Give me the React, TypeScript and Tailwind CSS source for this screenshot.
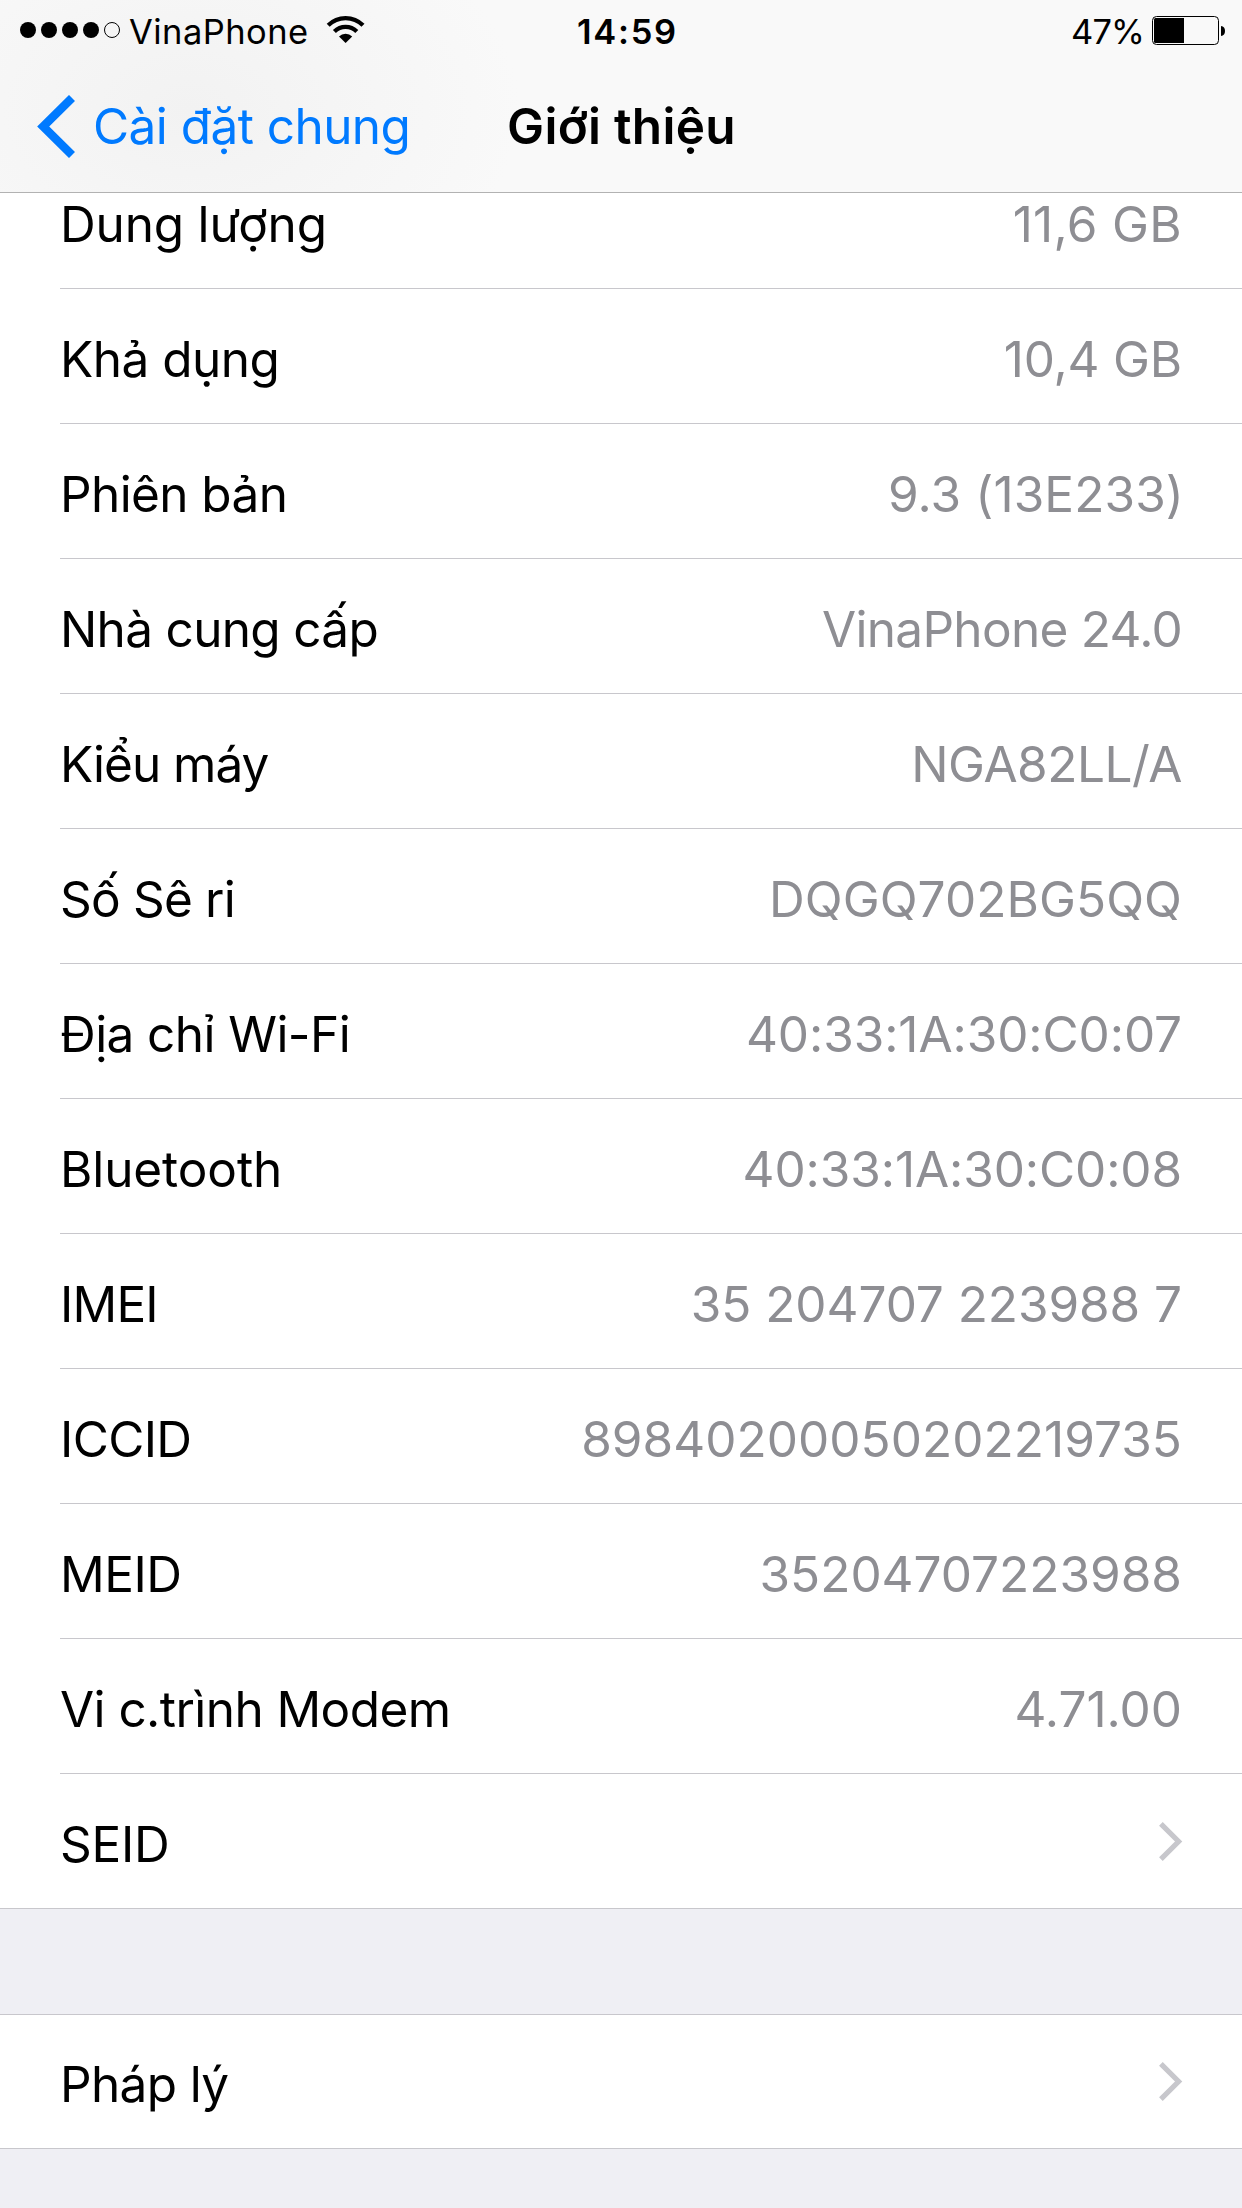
import clsx from 'clsx';

interface InfoItem {
  label: string;
  value?: string;
  labelClass: string;
  valueClass?: string;
}

const items: InfoItem[] = [
  { label: 'Dung lượng', value: '11,6 GB', labelClass: 'tracking-[-0.18px]', valueClass: 'tracking-[0.3px]' },
  { label: 'Khả dụng', value: '10,4 GB', labelClass: 'tracking-[-0.5px]', valueClass: 'tracking-[-0.2px]' },
  { label: 'Phiên bản', value: '9.3 (13E233)', labelClass: 'tracking-[-0.6px]', valueClass: 'tracking-[0.1px] -mr-0.5' },
  { label: 'Nhà cung cấp', value: 'VinaPhone 24.0', labelClass: 'tracking-[-0.68px]', valueClass: 'tracking-[-0.7px]' },
  { label: 'Kiểu máy', value: 'NGA82LL/A', labelClass: 'tracking-[-1px]', valueClass: 'tracking-[-0.45px]' },
  { label: 'Số Sê ri', value: 'DQGQ702BG5QQ', labelClass: 'tracking-[-0.8px]', valueClass: 'tracking-[0.08px]' },
  { label: 'Địa chỉ Wi-Fi', value: '40:33:1A:30:C0:07', labelClass: 'tracking-[-0.58px]', valueClass: 'tracking-[-0.08px]' },
  { label: 'Bluetooth', value: '40:33:1A:30:C0:08', labelClass: 'tracking-[-0.1px]', valueClass: 'tracking-[-0.09px]' },
  { label: 'IMEI', value: '35 204707 223988 7', labelClass: 'tracking-[-0.8px]', valueClass: 'tracking-[-0.06px]' },
  { label: 'ICCID', value: '89840200050202219735', labelClass: 'tracking-[-0.65px]', valueClass: 'tracking-[0.05px]' },
  { label: 'MEID', value: '35204707223988', labelClass: 'tracking-[-0.5px]', valueClass: 'tracking-normal' },
  { label: 'Vi c.trình Modem', value: '4.71.00', labelClass: 'tracking-[-0.56px]', valueClass: 'tracking-normal' },
  { label: 'SEID', labelClass: 'tracking-[-0.25px]' },
];

function SignalDots() {
  return (
    <div className="flex gap-[5px]">
      {[1, 2, 3, 4].map((n) => (
        <span key={n} className="w-4 h-4 rounded-full bg-black" />
      ))}
      <span className="w-4 h-4 rounded-full border border-black" />
    </div>
  );
}

function WifiIcon() {
  return (
    <svg width="42" height="32" viewBox="0 0 42 32" fill="none" className="shrink-0">
      <path d="M3.2 11.3A24.6 24.6 0 0 1 38 11.3" stroke="#000" strokeWidth="4.2" />
      <path d="M9.4 17.5A15.9 15.9 0 0 1 31.8 17.5" stroke="#000" strokeWidth="4.2" />
      <path d="M20.6 28.9L14 22.4A9.3 9.3 0 0 1 27.2 22.4Z" fill="#000" />
    </svg>
  );
}

function BatteryIcon() {
  return (
    <svg width="74" height="29" viewBox="0 0 74 29" className="shrink-0">
      <rect x="0.5" y="0.5" width="66" height="28" rx="4" fill="none" stroke="#000" />
      <path d="M3.5 2H32V27H3.5A1.5 1.5 0 0 1 2 25.5V3.5A1.5 1.5 0 0 1 3.5 2Z" fill="#000" />
      <path d="M69 10C71.6 10.4 73 12 73 15S71.6 19.6 69 20Z" fill="#000" />
    </svg>
  );
}

function StatusBar() {
  return (
    <div className="h-15 flex items-center pl-5 pr-4 text-[34.5px] leading-none">
      <div className="w-[557px] flex items-center">
        <SignalDots />
        <span className="pt-[5px] ml-[9px] w-[196px] tracking-[0.45px]">VinaPhone</span>
        <WifiIcon />
      </div>
      <span className="pt-[5px] font-semibold tracking-[1.7px]">14:59</span>
      <div className="ml-auto flex items-center gap-[8px]">
        <span className="pt-[5px] tracking-[-0.9px]">47%</span>
        <BatteryIcon />
      </div>
    </div>
  );
}

function NavBar() {
  return (
    <div className="h-[132px] flex items-center pl-[37px] text-[49.5px] leading-none">
      <button className="w-[470px] flex items-center gap-[18px] text-[#007aff]">
        <svg width="38" height="63" viewBox="0 0 38 63" fill="none" className="shrink-0">
          <path d="M35 3L6.2 31.5L35 60" stroke="currentColor" strokeWidth="8.5" />
        </svg>
        <span className="pt-0.5 tracking-[-0.55px] whitespace-nowrap">Cài đặt chung</span>
      </button>
      <h1 className="pt-0.5 font-semibold tracking-[0.3px]">Giới thiệu</h1>
    </div>
  );
}

function Chevron() {
  return (
    <svg width="24" height="39" viewBox="0 0 24 39" fill="none" className="shrink-0 -mr-px">
      <path d="M1.9 1.9L19.6 19.5L1.9 37.1" stroke="#c7c7cc" strokeWidth="5.2" />
    </svg>
  );
}

function Row({ item, last }: { item: InfoItem; last?: boolean }) {
  return (
    <div className={clsx('bg-white', last ? 'border-b border-[#c8c7cc]' : 'pl-[60px]')}>
      <div
        className={clsx(
          'flex items-center justify-between pr-[60px] text-[49.5px] leading-[60px]',
          last ? 'h-[134px] pl-[60px]' : 'h-[135px] border-b border-[#c8c7cc]',
        )}
      >
        <span className={clsx('pt-1.5', item.labelClass)}>{item.label}</span>
        {item.value ? (
          <span className={clsx('pt-1.5 text-[#8e8e93]', item.valueClass)}>{item.value}</span>
        ) : (
          <Chevron />
        )}
      </div>
    </div>
  );
}

export default function App() {
  return (
    <div className="w-[1242px] h-[2208px] overflow-hidden bg-[#efeff4] text-black font-['Inter',sans-serif]">
      <header className="relative z-10 border-b border-[#b2b2b2] bg-[#f9f9f9] bg-[radial-gradient(ellipse_330px_220px_at_190px_110px,#f2f2f2,#f9f9f9)]">
        <StatusBar />
        <NavBar />
      </header>

      {/* List is scrolled, so the first row is tucked under the header */}
      <section className="-mt-[39px]">
        {items.map((item, i) => (
          <Row key={item.label} item={item} last={i === items.length - 1} />
        ))}
      </section>

      <section className="mt-[105px] border-t border-[#c8c7cc]">
        <div className="h-[134px] flex items-center justify-between px-[60px] bg-white border-b border-[#c8c7cc] text-[49.5px] leading-[60px]">
          <span className="pt-1 tracking-[-0.65px]">Pháp lý</span>
          <Chevron />
        </div>
      </section>
    </div>
  );
}
